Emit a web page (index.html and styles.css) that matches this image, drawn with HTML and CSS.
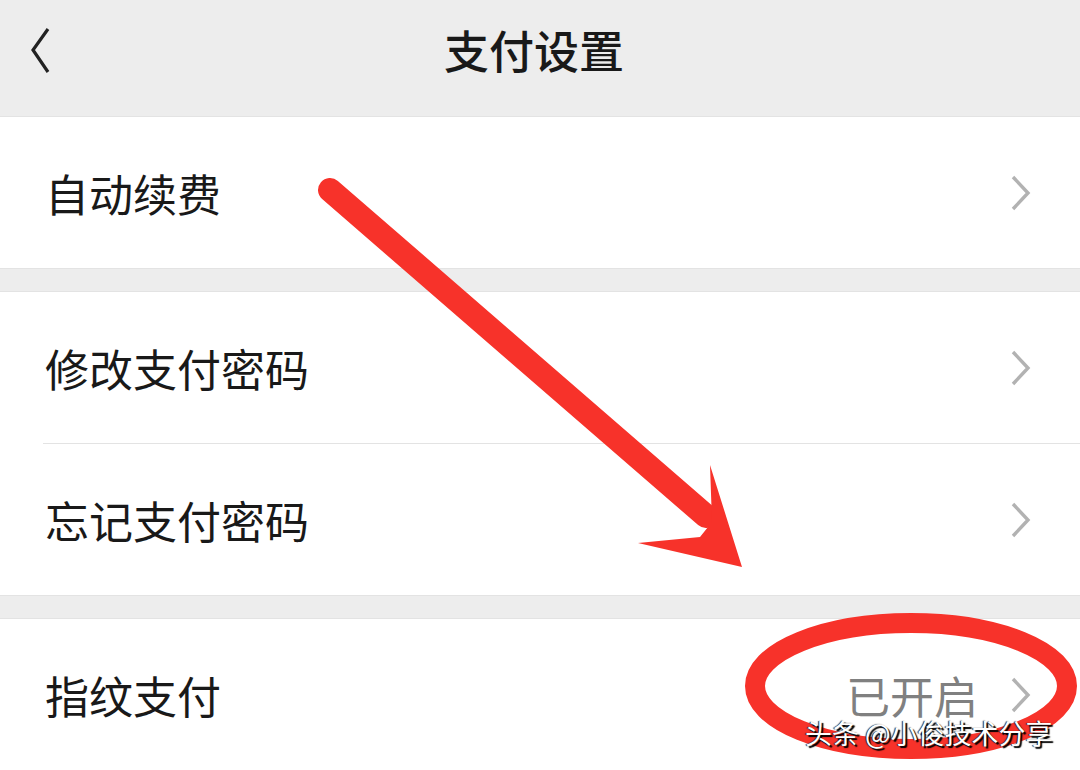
FILE: index.html
```html
<!DOCTYPE html>
<html lang="zh-CN">
  <head>
    <meta charset="UTF-8" />
    <meta name="viewport" content="width=device-width, initial-scale=1.0" />
    <title>支付设置</title>
    <link rel="stylesheet" href="styles.css">
  </head>
  <body>
    <div class="page">
      <header class="nav">
        <a class="back" href="#">
          <svg width="22" height="48" viewBox="0 0 22 48"><path d="M18 2 L3 23 L18 45" fill="none" stroke="#222" stroke-width="3.2"/></svg>
        </a>
        <h1 class="title">支付设置</h1>
        <span></span>
      </header>

      <div class="group">
        <div class="row">
          <span class="label">自动续费</span>
          <svg class="arrow" width="22" height="36" viewBox="0 0 22 36"><path d="M3 2 L18 18 L3 34" fill="none" stroke="#b2b2b2" stroke-width="3.4"/></svg>
        </div>
      </div>

      <div class="group">
        <div class="row">
          <span class="label">修改支付密码</span>
          <svg class="arrow" width="22" height="36" viewBox="0 0 22 36"><path d="M3 2 L18 18 L3 34" fill="none" stroke="#b2b2b2" stroke-width="3.4"/></svg>
        </div>
        <div class="row">
          <span class="label">忘记支付密码</span>
          <svg class="arrow" width="22" height="36" viewBox="0 0 22 36"><path d="M3 2 L18 18 L3 34" fill="none" stroke="#b2b2b2" stroke-width="3.4"/></svg>
        </div>
      </div>

      <div class="group">
        <div class="row">
          <span class="label">指纹支付</span>
          <span class="value">已开启</span>
          <svg class="arrow" width="22" height="36" viewBox="0 0 22 36"><path d="M3 2 L18 18 L3 34" fill="none" stroke="#b2b2b2" stroke-width="3.4"/></svg>
        </div>
      </div>

      <!-- red marks drawn over the screenshot -->
      <svg class="marks" width="1080" height="770" viewBox="0 0 1080 770">
        <line x1="330" y1="190" x2="706" y2="516" stroke="#f7322a" stroke-width="24" stroke-linecap="round"/>
        <polygon points="710,465 742,567 638,543 700,537 712,522" fill="#f7322a"/>
        <ellipse cx="911" cy="686" rx="156" ry="63" fill="none" stroke="#f7322a" stroke-width="20"/>
      </svg>

      <div class="watermark">头条 @小俊技术分享</div>
    </div>
  </body>
</html>
```

FILE: styles.css
```css
body {
  margin: 0;
  background-color: #ededed;
  font-family: "Noto Sans CJK SC", "Noto Sans", sans-serif;
  color: #191919;
}
.page {
  position: relative;
  width: 1080px;
  height: 770px;
  overflow: hidden;
}
.nav {
  height: 116px;
  display: grid;
  grid-template-columns: 1fr auto 1fr;
  align-items: center;
}
.back {
  display: flex;
  padding-left: 30px;
  padding-bottom: 14px;
}
.title {
  margin: 0 12px 0 0;
  font-size: 45px;
  font-weight: 500;
  padding-bottom: 18px;
}
.group {
  background-color: #fff;
  border-top: 1px solid #e3e3e3;
  border-bottom: 1px solid #e3e3e3;
  margin-bottom: 22px;
}
.row {
  height: 151px;
  display: flex;
  align-items: center;
  margin-left: 43px;
  padding: 0 48px 0 2px;
}
.row + .row {
  border-top: 1px solid #e3e3e3;
}
.label {
  flex: 1;
  font-size: 44px;
}
.value {
  font-size: 44px;
  color: #808080;
  margin-right: 32px;
}
.arrow {
  display: block;
}
.marks {
  position: absolute;
  left: 0;
  top: 0;
  pointer-events: none;
}
.watermark {
  position: absolute;
  left: 805px;
  top: 713px;
  font-size: 27px;
  color: #fff;
  text-shadow: 2px 2px 1px #000, -1px 0 1px #222;
  white-space: nowrap;
}
```
